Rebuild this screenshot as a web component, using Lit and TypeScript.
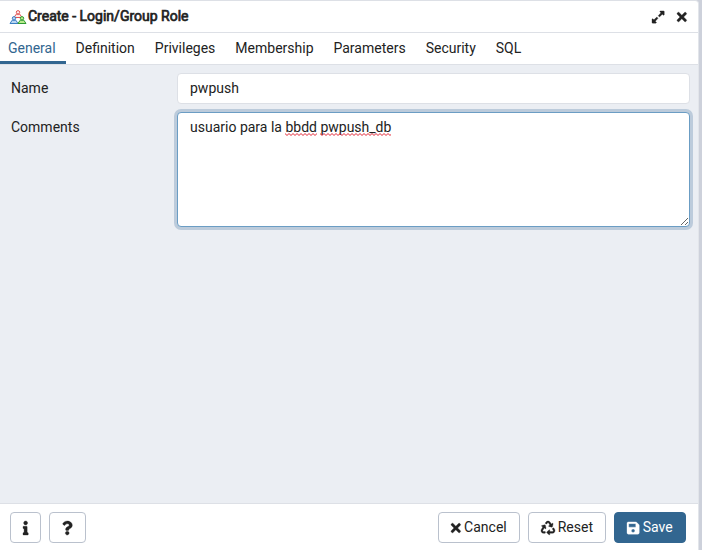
import { LitElement, html, svg, css } from "lit";
import { customElement, property, state } from "lit/decorators.js";
import { classMap } from "lit/directives/class-map.js";

type Glyph = { w: number; d: string };

const GLYPHS: Record<string, Glyph> = {
  expand: {
    w: 448,
    d: "M212.686 315.314L120 408l32.922 31.029c15.12 15.12 4.412 40.971-16.97 40.971h-112C10.697 480 0 469.255 0 456V344c0-21.382 25.803-32.09 40.922-16.971L72 360l92.686-92.686c6.248-6.248 16.379-6.248 22.627 0l25.373 25.373c6.249 6.248 6.249 16.378 0 22.627zm22.628-118.628L328 104l-32.922-31.029C279.958 57.851 290.666 32 312.048 32h112C437.303 32 448 42.745 448 56v112c0 21.382-25.803 32.09-40.922 16.971L376 152l-92.686 92.686c-6.248 6.248-16.379 6.248-22.627 0l-25.373-25.373c-6.249-6.248-6.249-16.378 0-22.627z",
  },
  times: {
    w: 352,
    d: "M242.72 256l100.07-100.07c12.28-12.28 12.28-32.19 0-44.48l-22.24-22.24c-12.28-12.28-32.19-12.28-44.48 0L176 189.28 75.93 89.21c-12.28-12.28-32.19-12.28-44.48 0L9.21 111.45c-12.28 12.28-12.28 32.19 0 44.48L109.28 256 9.21 356.07c-12.28 12.28-12.28 32.19 0 44.48l22.24 22.24c12.28 12.28 32.2 12.28 44.48 0L176 322.72l100.07 100.07c12.28 12.28 32.2 12.28 44.48 0l22.24-22.24c12.28-12.28 12.28-32.19 0-44.48L242.72 256z",
  },
  info: {
    w: 192,
    d: "M20 424.229h20V279.771H20c-11.046 0-20-8.954-20-20V212c0-11.046 8.954-20 20-20h112c11.046 0 20 8.954 20 20v212.229h20c11.046 0 20 8.954 20 20V492c0 11.046-8.954 20-20 20H20c-11.046 0-20-8.954-20-20v-47.771c0-11.046 8.954-20 20-20zM96 0C56.235 0 24 32.235 24 72s32.235 72 72 72 72-32.235 72-72S135.764 0 96 0z",
  },
  question: {
    w: 384,
    d: "M202.021 0C122.202 0 70.503 32.703 29.914 91.026c-7.363 10.58-5.093 25.086 5.178 32.874l43.138 32.709c10.373 7.865 25.132 6.026 33.253-4.148 25.049-31.381 43.63-49.449 82.757-49.449 30.764 0 68.816 19.799 68.816 49.631 0 22.552-18.617 34.134-48.993 51.164-35.423 19.86-82.299 44.576-82.299 106.405V320c0 13.255 10.745 24 24 24h72.471c13.255 0 24-10.745 24-24v-5.773c0-42.86 125.268-44.645 125.268-160.627C377.504 66.256 286.902 0 202.021 0zM192 373.459c-38.196 0-69.271 31.075-69.271 69.271 0 38.195 31.075 69.27 69.271 69.27s69.271-31.075 69.271-69.271-31.075-69.27-69.271-69.27z",
  },
  recycle: {
    w: 512,
    d: "M184.561 261.903c3.232 13.997-12.123 24.635-24.068 17.168l-40.736-25.455-50.867 81.402C55.606 356.273 70.96 384 96.012 384H148c6.627 0 12 5.373 12 12v40c0 6.627-5.373 12-12 12H96.115c-75.334 0-121.302-83.048-81.408-146.88l50.822-81.388-40.725-25.448c-12.081-7.547-8.966-25.961 4.879-29.158l110.237-25.45c8.611-1.988 17.201 3.381 19.189 11.99l25.452 110.237zm98.561-182.915l41.289 66.076-40.74 25.457c-12.051 7.528-9 25.953 4.879 29.158l110.237 25.45c8.672 1.999 17.215-3.438 19.189-11.99l25.45-110.237c3.197-13.844-11.99-24.719-24.068-17.168l-40.687 25.424-41.263-66.082c-37.521-60.033-125.209-60.171-162.816 0l-17.963 28.766c-3.51 5.62-1.8 13.021 3.82 16.533l33.919 21.195c5.62 3.512 13.024 1.803 16.536-3.817l17.961-28.743c12.712-20.341 41.973-19.676 54.257-.022zM497.288 301.12l-27.515-44.065c-3.511-5.623-10.916-7.334-16.538-3.821l-33.861 21.159c-5.62 3.512-7.33 10.915-3.818 16.536l27.564 44.112c13.257 21.211-2.057 48.96-27.136 48.96H320V336.02c0-14.213-17.242-21.383-27.313-11.313l-80 79.981c-6.249 6.248-6.249 16.379 0 22.627l80 79.989C302.689 517.308 320 510.3 320 495.989V448h95.88c75.274 0 121.335-82.997 81.408-146.88z",
  },
  save: {
    w: 448,
    d: "M433.941 129.941l-83.882-83.882A48 48 0 0 0 316.118 32H48C21.49 32 0 53.49 0 80v352c0 26.51 21.49 48 48 48h352c26.51 0 48-21.49 48-48V163.882a48 48 0 0 0-14.059-33.941zM224 416c-35.346 0-64-28.654-64-64 0-35.346 28.654-64 64-64s64 28.654 64 64c0 35.346-28.654 64-64 64zm96-304.52V212c0 6.627-5.373 12-12 12H76c-6.627 0-12-5.373-12-12V108c0-6.627 5.373-12 12-12h228.52c3.183 0 6.235 1.264 8.485 3.515l3.48 3.48A11.996 11.996 0 0 1 320 111.48z",
  },
};

@customElement("solid-icon")
export class SolidIcon extends LitElement {
  @property() name = "times";

  static styles = css`
    :host {
      display: inline-flex;
      height: 14px;
    }
    svg {
      display: block;
      height: 100%;
      overflow: visible;
      fill: currentColor;
      stroke: currentColor;
      stroke-width: 12;
    }
  `;

  render() {
    const g = GLYPHS[this.name];
    return html`<svg viewBox="0 0 ${g.w} 512" aria-hidden="true"><path d=${g.d}></path></svg>`;
  }
}

const person = (x: number, y: number, line: string, fill: string) => svg`
  <path d="M${x - 4} ${y + 7.5}l2.200-3.300h3.600l2.200 3.300z" fill=${fill} stroke=${line} stroke-linejoin="round"></path>
  <circle cx=${x} cy=${y + 2.3} r="1.700" fill=${fill} stroke=${line}></circle>
`;

@customElement("app-root")
export class AppRoot extends LitElement {
  @state() private tab = "General";
  @state() private comment = "usuario para la bbdd pwpush_db";

  private tabs = ["General", "Definition", "Privileges", "Membership", "Parameters", "Security", "SQL"];
  private unknownWords = ["bbdd", "pwpush_db"];

  static styles = css`
    :host {
      display: flex;
      box-sizing: border-box;
      min-height: 100vh;
      padding-right: 3px;
      background: #cdd1db;
      color: #222;
      font: 14px/21px Roboto, "Liberation Sans", sans-serif;
    }
    * {
      box-sizing: border-box;
    }
    button,
    input,
    textarea {
      font: inherit;
      color: inherit;
      margin: 0;
    }
    .dialog {
      flex: 1;
      display: flex;
      flex-direction: column;
      min-width: 0;
      background: #fff;
      border-top: 1px solid #dde0e6;
      border-right: 1px solid #e2e5ea;
      border-radius: 0 4px 0 0;
    }
    .titlebar {
      display: flex;
      align-items: center;
      height: 32px;
      padding: 0 11px 0 9px;
      border-bottom: 1px solid #dde0e6;
    }
    .title {
      flex: 1;
      margin: 0 0 0 1px;
      font-size: 14px;
      font-weight: 400;
      -webkit-text-stroke: 0.7px currentColor;
    }
    .roles {
      display: block;
      width: 18px;
      height: 14px;
    }
    .tool {
      display: flex;
      padding: 0;
      border: 0;
      background: none;
    }
    .tool + .tool {
      margin-left: 13px;
    }
    .tabs {
      display: flex;
      border-bottom: 1px solid #dde0e6;
    }
    .tab {
      height: 31px;
      padding: 2px 10px 0;
      border: 0;
      border-bottom: 3px solid transparent;
      background: none;
    }
    .tab:first-child {
      padding-left: 8px;
    }
    .tab.active {
      color: #326690;
      border-bottom-color: #326690;
    }
    .form {
      flex: 1;
      display: flex;
      flex-direction: column;
      gap: 8px;
      padding: 8px 8px 8px 11px;
      background: #ebeef3;
    }
    .row {
      display: grid;
      grid-template-columns: 166px 1fr;
    }
    .label {
      padding-top: 5px;
    }
    .field {
      display: block;
      width: 100%;
      height: 31px;
      padding: 4px 12px 6px;
      border: 1px solid #dde0e6;
      border-radius: 4px;
      outline: 0;
      background: #fff;
    }
    .area {
      position: relative;
    }
    textarea.field {
      height: 115px;
      resize: vertical;
      border-color: #6b9dc4;
      box-shadow: 0 0 0 3px #bccbdb;
    }
    .marks {
      position: absolute;
      inset: 0;
      padding: 5px 13px;
      overflow: hidden;
      color: transparent;
      white-space: pre-wrap;
      pointer-events: none;
    }
    .misspelt {
      padding-bottom: 1px;
      background: url("data:image/svg+xml,%3Csvg xmlns='http://www.w3.org/2000/svg' width='4' height='3'%3E%3Cpath d='M-1 1.500L0 .5L2 2.500L4 .5L5 1.500' fill='none' stroke='%23e02030'/%3E%3C/svg%3E")
        left bottom / 4px 3px repeat-x;
    }
    .footer {
      display: flex;
      gap: 8px;
      padding: 8px 12px 7px 10px;
      border-top: 1px solid #dde0e6;
    }
    .spacer {
      flex: 1;
    }
    .btn {
      display: flex;
      align-items: center;
      justify-content: center;
      gap: 3px;
      height: 31px;
      padding: 0 12px;
      border: 1px solid #bac1cd;
      border-radius: 4px;
      background: #fff;
    }
    .primary {
      min-width: 72px;
      border-color: #326690;
      background: #326690;
      color: #fff;
    }
  `;

  private onInput(e: Event) {
    this.comment = (e.target as HTMLTextAreaElement).value;
  }

  private spellMarks() {
    return this.comment
      .split(/(\s+)/)
      .map((part) => (this.unknownWords.includes(part) ? html`<span class="misspelt">${part}</span>` : part));
  }

  render() {
    return html`
      <section class="dialog" role="dialog" aria-labelledby="title">
        <header class="titlebar">
          <svg class="roles" viewBox="0 0 18 14" aria-hidden="true">
            ${person(9, 0, "#e05252", "#fdeaea")} ${person(5, 6, "#3b7fc4", "#b9d6f2")}
            ${person(13, 6, "#2f9a32", "#b8ea8c")}
          </svg>
          <h1 class="title" id="title">Create - Login/Group Role</h1>
          <button class="tool" aria-label="Maximize"><solid-icon name="expand"></solid-icon></button>
          <button class="tool" aria-label="Close"><solid-icon name="times"></solid-icon></button>
        </header>
        <nav class="tabs" role="tablist">
          ${this.tabs.map(
            (t) => html`<button
              role="tab"
              aria-selected=${t === this.tab}
              class=${classMap({ tab: true, active: t === this.tab })}
              @click=${() => (this.tab = t)}
            >${t}</button>`
          )}
        </nav>
        <form class="form">
          <div class="row">
            <label class="label" for="name">Name</label>
            <input class="field" id="name" type="text" value="pwpush" />
          </div>
          <div class="row">
            <label class="label" for="comments">Comments</label>
            <div class="area">
              <textarea class="field" id="comments" spellcheck="false" .value=${this.comment} @input=${this.onInput}></textarea>
              <div class="marks" aria-hidden="true">${this.spellMarks()}</div>
            </div>
          </div>
        </form>
        <footer class="footer">
          <button class="btn" aria-label="Information"><solid-icon name="info"></solid-icon></button>
          <button class="btn" aria-label="Help"><solid-icon name="question"></solid-icon></button>
          <span class="spacer"></span>
          <button class="btn"><solid-icon name="times"></solid-icon>Cancel</button>
          <button class="btn"><solid-icon name="recycle"></solid-icon>Reset</button>
          <button class="btn primary"><solid-icon name="save"></solid-icon>Save</button>
        </footer>
      </section>
    `;
  }
}
